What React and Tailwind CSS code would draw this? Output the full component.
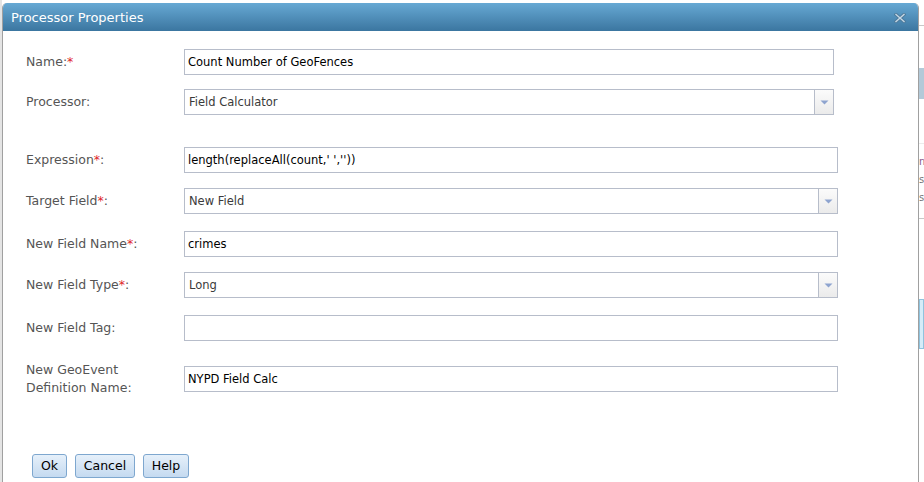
import React from "react";

const FONT = { fontFamily: '"DejaVu Sans", Verdana, sans-serif' };

function Req() {
  return <span className="text-[#e0262a]">*</span>;
}

function Row({ label, mt, children }) {
  return (
    <div className={`flex h-[26px] items-center ${mt}`}>
      <div className="w-[158px] shrink-0 text-[12.5px] leading-[18px] text-[#555555]">{label}</div>
      {children}
    </div>
  );
}

function TextInput({ value, w }) {
  return (
    <div className={`${w} flex h-[26px] items-center border border-[#b7bdca] bg-white px-[3px] pt-[2px] text-[11.5px] text-black`}>
      {value}
    </div>
  );
}

function Select({ value, w }) {
  return (
    <div className={`${w} flex h-[26px] items-stretch border border-[#b7bdca] bg-white`}>
      <div className="flex flex-1 items-center px-[4px] pt-[2px] text-[11.5px] text-[#3a3a3a]">{value}</div>
      <div className="flex w-[19px] items-center justify-center border-l border-[#b7bdca] bg-gradient-to-b from-[#fbfbfb] to-[#ebebeb]">
        <svg width="9" height="5" viewBox="0 0 9 5">
          <path d="M0.5 0.5 H8.5 L4.5 4.5 Z" fill="#8ea4cf" />
        </svg>
      </div>
    </div>
  );
}

function Btn({ children, w }) {
  return (
    <div className={`${w} flex h-[24px] items-center justify-center rounded-[3px] border border-[#7ea7cf] bg-gradient-to-b from-[#e6f0fa] to-[#c5daf0] text-[12.5px] text-black`}>
      {children}
    </div>
  );
}

export default function App() {
  return (
    <div className="flex h-[482px] w-[924px] overflow-hidden bg-white" style={FONT}>
      <div className="w-[2px] shrink-0 bg-[#e4e4e4]" />
      <div className="mt-[3px] flex w-[917px] shrink-0 flex-col overflow-hidden rounded-t-[5px] border-x border-[#a0a0a0] bg-white">
        <div className="flex h-[28px] shrink-0 items-center justify-between bg-gradient-to-b from-[#67a9d4] to-[#3b76a0] pl-[8px] pr-[10px] pt-[1px]">
          <span className="text-[13px] text-white">Processor Properties</span>
          <svg width="12" height="10" viewBox="0 0 12 10" className="mr-[2px]">
            <path d="M2 1.5 L10 8.5 M10 1.5 L2 8.5" stroke="#4d7b9c" strokeWidth="3.4" strokeLinecap="square" />
            <path d="M2 1.5 L10 8.5 M10 1.5 L2 8.5" stroke="#c4d6e3" strokeWidth="1.4" strokeLinecap="square" />
          </svg>
        </div>
        <div className="flex flex-1 flex-col pl-[23px] pt-[18px]">
          <Row label={<>Name:<Req /></>} mt="">
            <TextInput value="Count Number of GeoFences" w="w-[650px]" />
          </Row>
          <Row label="Processor:" mt="mt-[14px]">
            <Select value="Field Calculator" w="w-[650px]" />
          </Row>
          <Row label={<>Expression<Req />:</>} mt="mt-[32px]">
            <TextInput value="length(replaceAll(count,' ',''))" w="w-[654px]" />
          </Row>
          <Row label={<>Target Field<Req />:</>} mt="mt-[15px]">
            <Select value="New Field" w="w-[654px]" />
          </Row>
          <Row label={<>New Field Name<Req />:</>} mt="mt-[17px]">
            <TextInput value="crimes" w="w-[654px]" />
          </Row>
          <Row label={<>New Field Type<Req />:</>} mt="mt-[15px]">
            <Select value="Long" w="w-[654px]" />
          </Row>
          <Row label="New Field Tag:" mt="mt-[17px]">
            <TextInput value="" w="w-[654px]" />
          </Row>
          <Row label={<>New GeoEvent<br />Definition Name:</>} mt="mt-[25px]">
            <TextInput value="NYPD Field Calc" w="w-[654px]" />
          </Row>
          <div className="ml-[6px] mt-[62px] flex gap-[8px]">
            <Btn w="w-[35px]">Ok</Btn>
            <Btn w="w-[60px]">Cancel</Btn>
            <Btn w="w-[46px]">Help</Btn>
          </div>
        </div>
      </div>
      <div className="flex w-[5px] shrink-0 flex-col bg-white">
        <div className="mt-[25px] h-px bg-[#c8c8c8]" />
        <div className="mt-[42px] h-[31px] bg-[#b3c9d8]" />
        <div className="mt-[44px] h-px bg-[#ececec]" />
        <div className="mt-[9px] h-[18px] text-[10px] leading-[18px] text-[#8a5a8a]">n</div>
        <div className="h-[18px] text-[10px] leading-[18px] text-[#777]">s</div>
        <div className="h-[18px] text-[10px] leading-[18px] text-[#777]">s</div>
        <div className="mt-[11px] h-px bg-[#c8c8c8]" />
        <div className="mt-[80px] h-[50px] border border-[#8fc3de] bg-[#d5ecf8]" />
      </div>
    </div>
  );
}
